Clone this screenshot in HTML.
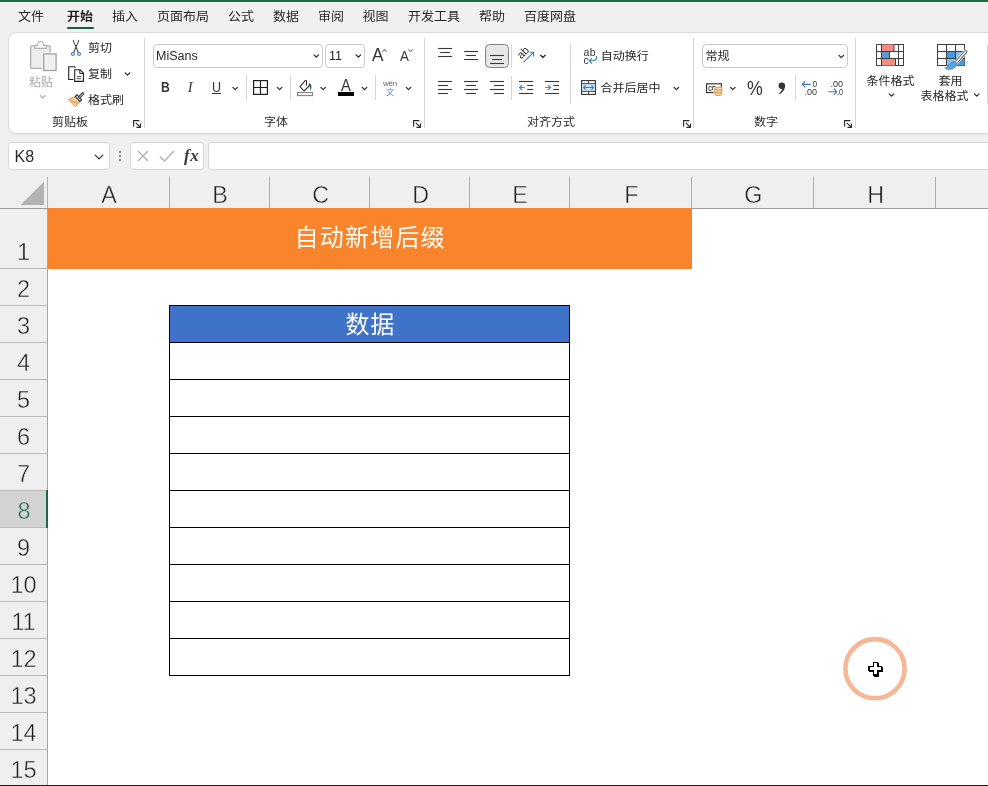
<!DOCTYPE html>
<html lang="zh-CN">
<head>
<meta charset="utf-8">
<title>Excel</title>
<style>
*{box-sizing:border-box;margin:0;padding:0}
html,body{width:988px;height:786px;overflow:hidden;background:#fff}
body{position:relative;font-family:"Liberation Sans","Noto Sans CJK SC",sans-serif;color:#242424;font-size:12px;line-height:1;-webkit-font-smoothing:antialiased}
.a,.t,.box,.sep,svg{position:absolute}
.t{white-space:nowrap;line-height:1}
.cj{transform:scaleY(.93);transform-origin:50% 54%}
svg{overflow:visible}
#app{position:absolute;left:0;top:0;width:988px;height:786px;overflow:hidden;will-change:transform}
#topbar{left:0;top:0;width:988px;height:2px;background:#176a41}
#tabs{left:0;top:2px;width:988px;height:175px;background:#f0f0f0}
.tab{font-size:13px;top:10px;color:#262626}
#ribbon{left:8px;top:32px;width:1000px;height:102px;background:#fff;border:1px solid #dadada;border-radius:8px;box-shadow:0 1px 1px rgba(0,0,0,.05)}
#below{left:0;top:134px;width:988px;height:43px;background:#f0f0f0}
.rt{font-size:12px;color:#262626}
.gl{font-size:12px;color:#2b2b2b;top:116px}
.sep{width:1px;background:#d6d6d6}
.box{background:#fff;border:1px solid #c9c9c9;border-radius:4px}
.colh{top:177px;height:31px;border-right:1px solid #adadad;font-size:24px;color:#1f1f1f;text-align:center;line-height:35px;padding-left:1.4px}
.colh span{display:inline-block;transform:scaleX(.97)}
.rowh{left:0;width:47px;border-bottom:1px solid #bcbcbc;font-size:24px;color:#1f1f1f;text-align:center}
.rowh span{position:absolute;left:0;right:0;bottom:4px;line-height:1;transform:scaleX(.98)}
.colh,.rowh{-webkit-text-stroke:.45px #efefef}
.rowh.sel{-webkit-text-stroke:.45px #d3d3d3;background:#d3d3d3;color:#2a6a4d;width:48px;border-right:2px solid #1f6844}
.rowh.sel span{right:-2px}
.ch{fill:none;stroke:#3b3b3b;stroke-width:1.2;stroke-linecap:round;stroke-linejoin:round}
</style>
</head>
<body>
<div id="app">
<div class="a" id="tabs"></div>
<div class="a" id="topbar"></div>
<div class="a" id="below"></div>
<div class="a" id="ribbon"></div>
<span class="t tab cj" style="left:18px;top:10px;">文件</span>
<span class="t tab cj" style="left:67px;top:10px;font-weight:bold;color:#1f1f1f">开始</span>
<span class="t tab cj" style="left:112px;top:10px;">插入</span>
<span class="t tab cj" style="left:157px;top:10px;">页面布局</span>
<span class="t tab cj" style="left:228px;top:10px;">公式</span>
<span class="t tab cj" style="left:273px;top:10px;">数据</span>
<span class="t tab cj" style="left:318px;top:10px;">审阅</span>
<span class="t tab cj" style="left:362.6px;top:10px;">视图</span>
<span class="t tab cj" style="left:408px;top:10px;">开发工具</span>
<span class="t tab cj" style="left:479px;top:10px;">帮助</span>
<span class="t tab cj" style="left:524px;top:10px;">百度网盘</span>
<div class="a" style="left:67px;top:27px;width:27px;height:2px;background:#1f5a40;border-radius:1px"></div>
<svg style="left:24px;top:36px" width="40" height="40" viewBox="0 0 40 40"><rect x="6.7" y="9.8" width="19.4" height="22.6" rx=".6" fill="#ededed" stroke="#b4b4b4" stroke-width="1.3"/><path d="M10.8 9.4H13.5C13.5 7.2 14.6 5.5 16.5 5.5C18.4 5.5 19.5 7.2 19.5 9.4H22.2V12.4H10.8Z" fill="#fafafa" stroke="#b0b0b0" stroke-width="1.1"/><rect x="18.6" y="16.8" width="14.4" height="18.6" fill="#fff"/><rect x="19.7" y="17.9" width="12.4" height="16.6" fill="#f0f0f0" stroke="#a2a2a2" stroke-width="1.3"/></svg>
<span class="t rt cj" style="left:29px;top:75.6px;color:#a8a8a8">粘贴</span>
<svg style="left:0;top:0" width="1" height="1"><path d="M40.300000000000004 95.39999999999999L42.7 97.8L45.1 95.39999999999999" fill="none" stroke="#a8a8a8" stroke-width="1.1" stroke-linecap="round" stroke-linejoin="round"/></svg>
<svg style="left:70px;top:40px" width="12" height="16" viewBox="0 0 12 16"><path d="M3.3 0.3C3.6 3 4.6 4.6 5.9 6.4L8.1 12.2M8.7 0.3C8.4 3 7.4 4.6 6.1 6.4L3.9 12.2" fill="none" stroke="#444" stroke-width="1.05" stroke-linecap="round"/><circle cx="2.9" cy="13.9" r="1.55" fill="#d9ecfa" stroke="#3576b3" stroke-width="1"/><circle cx="9.05" cy="13.9" r="1.55" fill="#d9ecfa" stroke="#3576b3" stroke-width="1"/></svg>
<span class="t rt cj" style="left:88px;top:42px;">剪切</span>
<svg style="left:68px;top:66px" width="16" height="16" viewBox="0 0 16 16"><path d="M5.4 13.5H0.7V0.7H6.2L7.6 1.8" fill="none" stroke="#222" stroke-width="1.1"/><path d="M6.7 3.7H12.2L15.4 7V15.4H6.7Z" fill="#fff" stroke="#222" stroke-width="1.1"/><path d="M11.8 3.9V7.4H15.2" fill="none" stroke="#222" stroke-width="1"/><path d="M9 10.5H13M9 12.6H13" fill="none" stroke="#404040" stroke-width=".9"/></svg>
<span class="t rt cj" style="left:88px;top:68px;">复制</span>
<svg style="left:0;top:0" width="1" height="1"><path d="M125.2 72.85L127.5 75.15L129.8 72.85" fill="none" stroke="#2b2b2b" stroke-width="1.25" stroke-linecap="round" stroke-linejoin="round"/></svg>
<svg style="left:68px;top:92px" width="17" height="16" viewBox="0 0 17 16"><path d="M0.5 7.6L7.4 4.4L11.8 9.6L7.3 14.8Z" fill="#f8cf9e" stroke="#dd9146" stroke-width="1"/><path d="M3 8.4L9.6 11.6" stroke="#e3a058" stroke-width="1.2"/><path d="M7.3 4.4L9 2.7L13.6 8L11.8 9.7Z" fill="#d4e6f6" stroke="#333" stroke-width="1.1" stroke-linejoin="round"/><path d="M11.4 5.2L14.9 1.6" stroke="#333" stroke-width="2.8" stroke-linecap="round"/><path d="M11.4 5.2L14.9 1.6" stroke="#fff" stroke-width=".9" stroke-linecap="round"/></svg>
<span class="t rt cj" style="left:88px;top:94px;">格式刷</span>
<span class="t gl cj" style="left:52px;top:116px;">剪贴板</span>
<svg style="left:133px;top:120px" width="8" height="8" viewBox="0 0 8 8"><path d="M0.6 6.4V0.6H6.4" fill="none" stroke="#2b2b2b" stroke-width="1.15"/><path d="M2.8 2.8L7.2 7.2M7.4 3.4V7.4H3.4" fill="none" stroke="#2b2b2b" stroke-width="1.15"/></svg>
<div class="sep" style="left:144px;top:38px;height:90px"></div>
<div class="box" style="left:153px;top:44px;width:170px;height:24px"></div>
<span class="t rt" style="left:156px;top:50px;font-size:12.5px">MiSans</span>
<svg style="left:0;top:0" width="1" height="1"><path d="M314.0 54.85L316.3 57.15L318.6 54.85" fill="none" stroke="#2b2b2b" stroke-width="1.25" stroke-linecap="round" stroke-linejoin="round"/></svg>
<div class="box" style="left:325px;top:44px;width:40px;height:24px"></div>
<span class="t rt" style="left:329px;top:50px;font-size:12.5px">11</span>
<svg style="left:0;top:0" width="1" height="1"><path d="M356.09999999999997 54.85L358.4 57.15L360.7 54.85" fill="none" stroke="#2b2b2b" stroke-width="1.25" stroke-linecap="round" stroke-linejoin="round"/></svg>
<span class="t rt" style="left:371.8px;top:46.2px;font-size:18.5px;color:#333;transform:scaleX(.93);transform-origin:0 0">A</span>
<svg style="left:382px;top:49px" width="6" height="3" viewBox="0 0 6 3"><path d="M0.5 2.7L2.6 0.6L4.7 2.7" fill="none" stroke="#4a8fc0" stroke-width="1.1"/></svg>
<span class="t rt" style="left:399.7px;top:48.9px;font-size:14px;color:#333;transform:scaleX(.95);transform-origin:0 0">A</span>
<svg style="left:408px;top:49px" width="6" height="3" viewBox="0 0 6 3"><path d="M0.3 0.4L2.6 2.6L4.9 0.4" fill="none" stroke="#4a8fc0" stroke-width="1.1"/></svg>
<span class="t rt" style="left:161px;top:80px;font-weight:bold;font-size:14.5px;color:#333;transform:scaleX(.84);transform-origin:0 0">B</span>
<span class="t rt" style="left:187.8px;top:79.6px;font-family:'Liberation Serif',serif;font-style:italic;font-size:14.5px;color:#333">I</span>
<span class="t rt" style="left:212.2px;top:80.2px;font-size:14.2px;color:#333;transform:scaleX(.88);transform-origin:0 0">U</span>
<div class="a" style="left:212px;top:93px;width:9px;height:1px;background:#333"></div>
<svg style="left:0;top:0" width="1" height="1"><path d="M232.89999999999998 87.35L235.2 89.65L237.5 87.35" fill="none" stroke="#2b2b2b" stroke-width="1.25" stroke-linecap="round" stroke-linejoin="round"/></svg>
<div class="sep" style="left:246px;top:75px;height:25px"></div>
<svg style="left:253px;top:80px" width="15" height="15" viewBox="0 0 15 15"><rect x="0.6" y="0.6" width="13.8" height="13.8" fill="none" stroke="#1f1f1f" stroke-width="1.2"/><path d="M7.5 0.6V14.4M0.6 7.5H14.4" fill="none" stroke="#1f1f1f" stroke-width="1.2"/></svg>
<svg style="left:0;top:0" width="1" height="1"><path d="M277.3 87.35L279.6 89.65L281.90000000000003 87.35" fill="none" stroke="#2b2b2b" stroke-width="1.25" stroke-linecap="round" stroke-linejoin="round"/></svg>
<div class="sep" style="left:290px;top:75px;height:25px"></div>
<svg style="left:297px;top:79px" width="17" height="18" viewBox="0 0 17 18"><rect x="0.6" y="13.6" width="15" height="3" fill="#fff" stroke="#7a7a7a" stroke-width="1"/><path d="M8.2 1.7L3 7.7L7 12L12.2 6.8" fill="none" stroke="#2a2a2a" stroke-width="1.1" stroke-linejoin="round"/><path d="M8.2 1.7C8.8 1 9.5 1.4 9.5 2.2V6.4" fill="none" stroke="#2a2a2a" stroke-width="1.1"/><path d="M12.2 4.6C14.3 5 14.6 8.2 13.6 10.8C13.5 8.6 13.2 7 12 6.8Z" fill="#2d4256" stroke="#2d4256" stroke-width=".5"/></svg>
<svg style="left:0;top:0" width="1" height="1"><path d="M320.9 87.35L323.2 89.65L325.5 87.35" fill="none" stroke="#2b2b2b" stroke-width="1.25" stroke-linecap="round" stroke-linejoin="round"/></svg>
<span class="t rt" style="left:341.2px;top:78px;font-size:16px;color:#333;transform:scaleX(.92);transform-origin:0 0">A</span>
<div class="a" style="left:338px;top:92px;width:16px;height:4px;background:#000"></div>
<svg style="left:0;top:0" width="1" height="1"><path d="M362.2 87.35L364.5 89.65L366.8 87.35" fill="none" stroke="#2b2b2b" stroke-width="1.25" stroke-linecap="round" stroke-linejoin="round"/></svg>
<div class="sep" style="left:375px;top:75px;height:25px"></div>
<span class="t rt" style="left:383px;top:80px;font-size:8px;color:#666;letter-spacing:-.2px">wén</span>
<span class="t rt cj" style="left:386px;top:88px;font-size:8.5px;color:#4a8fd0">文</span>
<svg style="left:0;top:0" width="1" height="1"><path d="M406.2 87.35L408.5 89.65L410.8 87.35" fill="none" stroke="#2b2b2b" stroke-width="1.25" stroke-linecap="round" stroke-linejoin="round"/></svg>
<span class="t gl cj" style="left:264px;top:116px;">字体</span>
<svg style="left:413px;top:120px" width="8" height="8" viewBox="0 0 8 8"><path d="M0.6 6.4V0.6H6.4" fill="none" stroke="#2b2b2b" stroke-width="1.15"/><path d="M2.8 2.8L7.2 7.2M7.4 3.4V7.4H3.4" fill="none" stroke="#2b2b2b" stroke-width="1.15"/></svg>
<div class="sep" style="left:424px;top:38px;height:90px"></div>
<svg style="left:438px;top:0" width="16" height="110"><path d="M0.1 48.5H14" stroke="#3a3a3a" stroke-width="1.1" fill="none"/><path d="M2.1 52.5H12" stroke="#3a3a3a" stroke-width="1.1" fill="none"/><path d="M0.1 56.5H14" stroke="#3a3a3a" stroke-width="1.1" fill="none"/></svg>
<svg style="left:464px;top:0" width="16" height="110"><path d="M0.1 51.5H14" stroke="#3a3a3a" stroke-width="1.1" fill="none"/><path d="M2.1 55.5H12" stroke="#3a3a3a" stroke-width="1.1" fill="none"/><path d="M0.1 59.5H14" stroke="#3a3a3a" stroke-width="1.1" fill="none"/></svg>
<div class="a" style="left:485px;top:44px;width:24px;height:24px;background:#e7e7e7;border:1px solid #838383;border-radius:4.5px"></div>
<svg style="left:490px;top:0" width="16" height="110"><path d="M0.1 55.5H14" stroke="#3a3a3a" stroke-width="1.1" fill="none"/><path d="M2.1 59.5H12" stroke="#3a3a3a" stroke-width="1.1" fill="none"/><path d="M0.1 63.5H14" stroke="#3a3a3a" stroke-width="1.1" fill="none"/></svg>
<div class="sep" style="left:511px;top:44px;height:24px"></div>
<svg style="left:518px;top:48px" width="17" height="16" viewBox="0 0 17 16"><path d="M5.4 14.4L15.3 4.6" fill="none" stroke="#3d7ab3" stroke-width="1.1"/><path d="M11.6 4.3H15.6V8.4" fill="none" stroke="#3d7ab3" stroke-width="1.1"/><text x="0" y="0" transform="translate(3.2 11.6) rotate(-45)" font-size="11" fill="#2b2b2b" font-family="Liberation Sans,sans-serif">ab</text></svg>
<svg style="left:0;top:0" width="1" height="1"><path d="M540.6 55.25L542.9 57.55L545.1999999999999 55.25" fill="none" stroke="#2b2b2b" stroke-width="1.25" stroke-linecap="round" stroke-linejoin="round"/></svg>
<svg style="left:438px;top:0" width="16" height="110"><path d="M0.1 81.5H14" stroke="#3a3a3a" stroke-width="1.1" fill="none"/><path d="M0.1 85.5H10" stroke="#3a3a3a" stroke-width="1.1" fill="none"/><path d="M0.1 89.5H14" stroke="#3a3a3a" stroke-width="1.1" fill="none"/><path d="M0.1 93.5H10" stroke="#3a3a3a" stroke-width="1.1" fill="none"/></svg>
<svg style="left:464px;top:0" width="16" height="110"><path d="M0.1 81.5H14" stroke="#3a3a3a" stroke-width="1.1" fill="none"/><path d="M2.1 85.5H12" stroke="#3a3a3a" stroke-width="1.1" fill="none"/><path d="M0.1 89.5H14" stroke="#3a3a3a" stroke-width="1.1" fill="none"/><path d="M2.1 93.5H12" stroke="#3a3a3a" stroke-width="1.1" fill="none"/></svg>
<svg style="left:490px;top:0" width="16" height="110"><path d="M0.1 81.5H14" stroke="#3a3a3a" stroke-width="1.1" fill="none"/><path d="M4.1 85.5H14" stroke="#3a3a3a" stroke-width="1.1" fill="none"/><path d="M0.1 89.5H14" stroke="#3a3a3a" stroke-width="1.1" fill="none"/><path d="M4.1 93.5H14" stroke="#3a3a3a" stroke-width="1.1" fill="none"/></svg>
<div class="sep" style="left:511px;top:76px;height:24px"></div>
<svg style="left:519px;top:0" width="16" height="110"><path d="M0 81.5H14" stroke="#3a3a3a" stroke-width="1.1" fill="none"/><path d="M8.2 85.5H14" stroke="#3a3a3a" stroke-width="1.1" fill="none"/><path d="M8.2 89.5H14" stroke="#3a3a3a" stroke-width="1.1" fill="none"/><path d="M0 93.5H14" stroke="#3a3a3a" stroke-width="1.1" fill="none"/></svg>
<svg style="left:519px;top:84px" width="8" height="7" viewBox="0 0 8 7"><path d="M0.6 3.5H5.8M3 1L0.6 3.5L3 6" fill="none" stroke="#4a86b8" stroke-width="1.1"/></svg>
<svg style="left:545px;top:0" width="16" height="110"><path d="M0 81.5H14" stroke="#3a3a3a" stroke-width="1.1" fill="none"/><path d="M8.2 85.5H14" stroke="#3a3a3a" stroke-width="1.1" fill="none"/><path d="M8.2 89.5H14" stroke="#3a3a3a" stroke-width="1.1" fill="none"/><path d="M0 93.5H14" stroke="#3a3a3a" stroke-width="1.1" fill="none"/></svg>
<svg style="left:545px;top:84px" width="8" height="7" viewBox="0 0 8 7"><path d="M0.2 3.5H5.6M3.2 1L5.6 3.5L3.2 6" fill="none" stroke="#4a86b8" stroke-width="1.1"/></svg>
<div class="sep" style="left:570px;top:43px;height:61px"></div>
<span class="t rt" style="left:583.6px;top:46.6px;font-size:10.5px;color:#333;letter-spacing:.2px">ab</span>
<span class="t rt" style="left:583.6px;top:54.6px;font-size:10.5px;color:#333">c</span>
<svg style="left:588px;top:55px" width="10" height="10" viewBox="0 0 10 10"><path d="M8.4 1C9.4 3.6 7.6 5.6 4.6 5.8H1.4M4 3.2L1.2 5.8L4 8.6" fill="none" stroke="#3a7cb8" stroke-width="1.1"/></svg>
<span class="t rt cj" style="left:600.8px;top:50px;">自动换行</span>
<svg style="left:581px;top:80px" width="15" height="15" viewBox="0 0 15 15"><rect x="0.6" y="0.6" width="13.8" height="13.8" fill="#fff" stroke="#333" stroke-width="1.1"/><rect x="1.2" y="3.8" width="12.6" height="7.4" fill="#cbe3f6"/><path d="M0.6 3.6H14.4M0.6 11.4H14.4M7.5 0.6V3.6M7.5 11.4V14.4" fill="none" stroke="#333" stroke-width=".9"/><path d="M2.5 7.5H12.5M4.6 5.4L2.5 7.5L4.6 9.6M10.4 5.4L12.5 7.5L10.4 9.6" fill="none" stroke="#3a7cb8" stroke-width="1.1"/></svg>
<span class="t rt cj" style="left:600.6px;top:81.7px;">合并后居中</span>
<svg style="left:0;top:0" width="1" height="1"><path d="M674.1 87.35L676.4 89.65L678.6999999999999 87.35" fill="none" stroke="#2b2b2b" stroke-width="1.25" stroke-linecap="round" stroke-linejoin="round"/></svg>
<span class="t gl cj" style="left:527px;top:116px;">对齐方式</span>
<svg style="left:682.5px;top:120px" width="8" height="8" viewBox="0 0 8 8"><path d="M0.6 6.4V0.6H6.4" fill="none" stroke="#2b2b2b" stroke-width="1.15"/><path d="M2.8 2.8L7.2 7.2M7.4 3.4V7.4H3.4" fill="none" stroke="#2b2b2b" stroke-width="1.15"/></svg>
<div class="sep" style="left:693px;top:38px;height:90px"></div>
<div class="box" style="left:702px;top:44px;width:146px;height:24px"></div>
<span class="t rt cj" style="left:705.5px;top:50px;">常规</span>
<svg style="left:0;top:0" width="1" height="1"><path d="M839.0 55.35L841.3 57.65L843.5999999999999 55.35" fill="none" stroke="#2b2b2b" stroke-width="1.25" stroke-linecap="round" stroke-linejoin="round"/></svg>
<svg style="left:706px;top:82px" width="17" height="15" viewBox="0 0 17 15"><rect x="0.6" y="1.8" width="14.8" height="8.8" fill="#fff" stroke="#2b2b2b" stroke-width="1.1"/><text x="2.3" y="8.8" font-size="7.4" font-weight="bold" fill="#2b2b2b" font-family="Liberation Sans,sans-serif" textLength="3.6" lengthAdjust="spacingAndGlyphs">C</text><path d="M9.4 4.4H6.8V8" fill="none" stroke="#2b2b2b" stroke-width="1"/><path d="M7.6 5.4h9v8.6h-9z" fill="#fff"/><path d="M8.8 6.6V12C8.8 14 15.8 14 15.8 12V6.6Z" fill="#f6d29f"/><ellipse cx="12.3" cy="6.6" rx="3.5" ry="1.4" fill="#f9dfb8" stroke="#cf9145" stroke-width=".9"/><path d="M8.8 6.6V12C8.8 14 15.8 14 15.8 12V6.6M8.8 9.3C8.8 11.3 15.8 11.3 15.8 9.3" fill="none" stroke="#cf9145" stroke-width=".9"/></svg>
<svg style="left:0;top:0" width="1" height="1"><path d="M730.5 87.35L732.8 89.65L735.0999999999999 87.35" fill="none" stroke="#2b2b2b" stroke-width="1.25" stroke-linecap="round" stroke-linejoin="round"/></svg>
<span class="t rt" style="left:746.8px;top:79.1px;font-size:19.5px;color:#333;transform:scaleX(.91);transform-origin:0 0">%</span>
<svg style="left:777px;top:82px" width="9" height="13" viewBox="0 0 9 13"><path d="M4.8 0.4a3.2 3.2 0 0 1 3.3 3.4c0 3.6-2.4 6.8-5.6 8.4l-.5-.8c1.8-1.2 2.9-2.6 3.1-4.3a3.3 3.3 0 0 1-3.5-3.3A3.2 3.2 0 0 1 4.8.4z" fill="#333"/></svg>
<div class="sep" style="left:795px;top:75px;height:25px"></div>
<svg style="left:801px;top:80px" width="18" height="16" viewBox="0 0 18 16"><path d="M1.2 4.3H9.8M4.2 1.2L1.2 4.3L4.2 7.4" fill="none" stroke="#3d7ab3" stroke-width="1.15"/><text x="11.4" y="6.7" font-size="9.6" fill="#333" font-family="Liberation Sans,sans-serif" textLength="4.6" lengthAdjust="spacingAndGlyphs">0</text><text x="3.4" y="14.9" font-size="9.6" fill="#333" font-family="Liberation Sans,sans-serif" textLength="12.6" lengthAdjust="spacingAndGlyphs">.00</text></svg>
<svg style="left:827px;top:80px" width="18" height="16" viewBox="0 0 18 16"><text x="3.4" y="6.7" font-size="9.6" fill="#333" font-family="Liberation Sans,sans-serif" textLength="12.6" lengthAdjust="spacingAndGlyphs">.00</text><path d="M1.2 11.7H9.8M6.8 8.6L9.8 11.7L6.8 14.8" fill="none" stroke="#3d7ab3" stroke-width="1.15"/><text x="10" y="14.9" font-size="9.6" fill="#333" font-family="Liberation Sans,sans-serif" textLength="6" lengthAdjust="spacingAndGlyphs">.0</text></svg>
<span class="t gl cj" style="left:754px;top:116px;">数字</span>
<svg style="left:844px;top:120px" width="8" height="8" viewBox="0 0 8 8"><path d="M0.6 6.4V0.6H6.4" fill="none" stroke="#2b2b2b" stroke-width="1.15"/><path d="M2.8 2.8L7.2 7.2M7.4 3.4V7.4H3.4" fill="none" stroke="#2b2b2b" stroke-width="1.15"/></svg>
<div class="sep" style="left:855px;top:38px;height:90px"></div>
<svg style="left:876px;top:44px" width="28" height="22" viewBox="0 0 28 22"><rect x="0.5" y="0.5" width="27" height="21" fill="#fff" stroke="#404040"/><rect x="5.5" y="0.5" width="12.5" height="7" fill="#f58a80"/><rect x="5.5" y="7.5" width="8" height="7" fill="#5b9bd5"/><rect x="5.5" y="14.5" width="14" height="7" fill="#f58a80"/><path d="M5.5 0.5V21.5M18 0.5V7.5M13.5 7.5V14.5M19.5 14.5V21.5M22.5 0.5V21.5M0.5 7.5H27.5M0.5 14.5H27.5" fill="none" stroke="#404040" stroke-width="1"/><path d="M13.5 0.5V21.5" fill="none" stroke="#404040" stroke-width="1" opacity=".0"/></svg>
<span class="t rt cj" style="left:866.5px;top:75px;">条件格式</span>
<svg style="left:0;top:0" width="1" height="1"><path d="M889.2 93.85L891.5 96.15L893.8 93.85" fill="none" stroke="#2b2b2b" stroke-width="1.25" stroke-linecap="round" stroke-linejoin="round"/></svg>
<svg style="left:937px;top:44px" width="30" height="27" viewBox="0 0 30 27"><rect x="0.5" y="0.5" width="27" height="21" fill="#fff" stroke="#404040"/><rect x="9.5" y="7.5" width="9" height="7" fill="#4a98e0"/><rect x="18.5" y="7.5" width="9" height="7" fill="#8cc0ee"/><rect x="9.5" y="14.5" width="9" height="7" fill="#8cc0ee"/><rect x="18.5" y="14.5" width="9" height="7" fill="#4a98e0"/><path d="M9.5 0.5V21.5M18.5 0.5V21.5M0.5 7.5H27.5M0.5 14.5H27.5" fill="none" stroke="#404040" stroke-width="1"/><path d="M28.8 7.6L18 19.8" stroke="#fff" stroke-width="4.6" fill="none" stroke-linecap="round"/><path d="M28.8 7.6L18 19.8" stroke="#4a4a4a" stroke-width="3.2" fill="none" stroke-linecap="round"/><path d="M28.8 7.6L18 19.8" stroke="#fff" stroke-width="1.5" fill="none" stroke-linecap="round"/><path d="M17.6 17.6C13.6 17.8 12.4 21.6 8 24.4C12.6 26.6 18.6 25 19.8 19.8Z" fill="#5aa5e6" stroke="#3a7fc0" stroke-width=".8"/></svg>
<span class="t rt cj" style="left:938.5px;top:75px;">套用</span>
<span class="t rt cj" style="left:920.5px;top:90px;">表格格式</span>
<svg style="left:0;top:0" width="1" height="1"><path d="M974.4000000000001 93.85L976.7 96.15L979.0 93.85" fill="none" stroke="#2b2b2b" stroke-width="1.25" stroke-linecap="round" stroke-linejoin="round"/></svg>
<div class="sep" style="left:987px;top:45px;height:58px;background:#d4d4d4"></div>
<div class="box" style="left:8px;top:142px;width:102px;height:28px;border-color:#d9d9d9"></div>
<span class="t rt" style="left:14.6px;top:149.2px;font-size:16px;color:#2b2b2b">K8</span>
<svg style="left:0;top:0" width="1" height="1"><path d="M95.25 155.1L99 158.9L102.75 155.1" fill="none" stroke="#333" stroke-width="1.3" stroke-linecap="round" stroke-linejoin="round"/></svg>
<svg style="left:118px;top:150px" width="4" height="12" viewBox="0 0 4 12"><circle cx="2" cy="2" r="1.2" fill="#8a8a8a"/><circle cx="2" cy="6" r="1.2" fill="#8a8a8a"/><circle cx="2" cy="10" r="1.2" fill="#8a8a8a"/></svg>
<div class="box" style="left:130px;top:142px;width:74px;height:28px;border-color:#d9d9d9"></div>
<svg style="left:137px;top:149.8px" width="12" height="12" viewBox="0 0 12 12"><path d="M1 1L11 11M11 1L1 11" fill="none" stroke="#b2b2b2" stroke-width="1.35"/></svg>
<svg style="left:159px;top:149.6px" width="16" height="12" viewBox="0 0 16 12"><path d="M1 6.5L5.5 11L15 1" fill="none" stroke="#b2b2b2" stroke-width="1.35"/></svg>
<span class="t rt" style="left:184px;top:146.5px;font-family:'Liberation Serif',serif;font-style:italic;font-weight:bold;font-size:17px;color:#3a3a3a;letter-spacing:.6px">fx</span>
<div class="box" style="left:208px;top:142px;width:800px;height:28px;border-color:#d9d9d9"></div>
<div class="a" style="left:0;top:177px;width:988px;height:32px;background:#efefef;border-bottom:1px solid #9d9d9d"></div>
<div class="a" style="left:0;top:209px;width:48px;height:578px;background:#efefef;border-right:1px solid #a6a6a6"></div>
<svg style="left:0px;top:177px" width="48" height="32" viewBox="0 0 48 32"><path d="M44 4.5V28H20.5Z" fill="#b3b3b3"/><rect x="47" y="0" width="1" height="31" fill="#b4b4b4"/></svg>
<div class="a colh" style="left:48px;width:122px"><span>A</span></div>
<div class="a colh" style="left:170px;width:100px"><span>B</span></div>
<div class="a colh" style="left:270px;width:100px"><span>C</span></div>
<div class="a colh" style="left:370px;width:100px"><span>D</span></div>
<div class="a colh" style="left:470px;width:100px"><span>E</span></div>
<div class="a colh" style="left:570px;width:122px"><span>F</span></div>
<div class="a colh" style="left:692px;width:122px"><span>G</span></div>
<div class="a colh" style="left:814px;width:122px"><span>H</span></div>
<div class="a colh" style="left:936px;width:122px"><span></span></div>
<div class="a rowh" style="top:209px;height:60px"><span>1</span></div>
<div class="a rowh" style="top:269px;height:37px"><span>2</span></div>
<div class="a rowh" style="top:306px;height:37px"><span>3</span></div>
<div class="a rowh" style="top:343px;height:37px"><span>4</span></div>
<div class="a rowh" style="top:380px;height:37px"><span>5</span></div>
<div class="a rowh" style="top:417px;height:37px"><span>6</span></div>
<div class="a rowh" style="top:454px;height:37px"><span>7</span></div>
<div class="a rowh sel" style="top:491px;height:37px"><span>8</span></div>
<div class="a rowh" style="top:528px;height:37px"><span>9</span></div>
<div class="a rowh" style="top:565px;height:37px"><span>10</span></div>
<div class="a rowh" style="top:602px;height:37px"><span>11</span></div>
<div class="a rowh" style="top:639px;height:37px"><span>12</span></div>
<div class="a rowh" style="top:676px;height:37px"><span>13</span></div>
<div class="a rowh" style="top:713px;height:37px"><span>14</span></div>
<div class="a rowh" style="top:750px;height:37px"><span>15</span></div>
<div class="a" id="selbar" style="left:46px;top:490px;width:2px;height:38px;background:#1f6844"></div>
<div class="a" style="left:48px;top:208px;width:644px;height:61px;background:#f9842c"><span class="t" style="left:0;width:644px;text-align:center;top:17.5px;font-size:24px;color:#fffdf6;letter-spacing:1.2px;padding-left:.4px">自动新增后缀</span></div>
<div class="a" style="left:169px;top:305px;width:401px;height:371px;border:1px solid #000;background:#fff"></div>
<div class="a" style="left:170px;top:306px;width:399px;height:36px;background:#3f72c9"><span class="t" style="left:0;width:399px;text-align:center;top:6.5px;font-size:24px;color:#fff;letter-spacing:.8px;padding-left:1.4px">数据</span></div>
<div class="a" style="left:169px;top:342px;width:401px;height:1px;background:#000"></div>
<div class="a" style="left:169px;top:379px;width:401px;height:1px;background:#000"></div>
<div class="a" style="left:169px;top:416px;width:401px;height:1px;background:#000"></div>
<div class="a" style="left:169px;top:453px;width:401px;height:1px;background:#000"></div>
<div class="a" style="left:169px;top:490px;width:401px;height:1px;background:#000"></div>
<div class="a" style="left:169px;top:527px;width:401px;height:1px;background:#000"></div>
<div class="a" style="left:169px;top:564px;width:401px;height:1px;background:#000"></div>
<div class="a" style="left:169px;top:601px;width:401px;height:1px;background:#000"></div>
<div class="a" style="left:169px;top:638px;width:401px;height:1px;background:#000"></div>
<div class="a" style="left:0;top:785px;width:988px;height:1px;background:#1a1a1a"></div>
<svg style="left:835px;top:630px" width="80" height="80" viewBox="0 0 80 80"><circle cx="40" cy="38.7" r="29.6" fill="none" stroke="#f6b796" stroke-width="4.6"/><g shape-rendering="crispEdges"><path d="M39 33h5v4h4v5h-4v5h-5v-5h-5v-5h5z" fill="#000"/><path d="M38 32h5v4h4v5h-4v5h-5v-5h-5v-5h5z" fill="#000"/><path d="M39 33h3v4h4v3h-4v4h-3v-4h-4v-3h4z" fill="#fff"/></g></svg>
</div>
</body>
</html>
